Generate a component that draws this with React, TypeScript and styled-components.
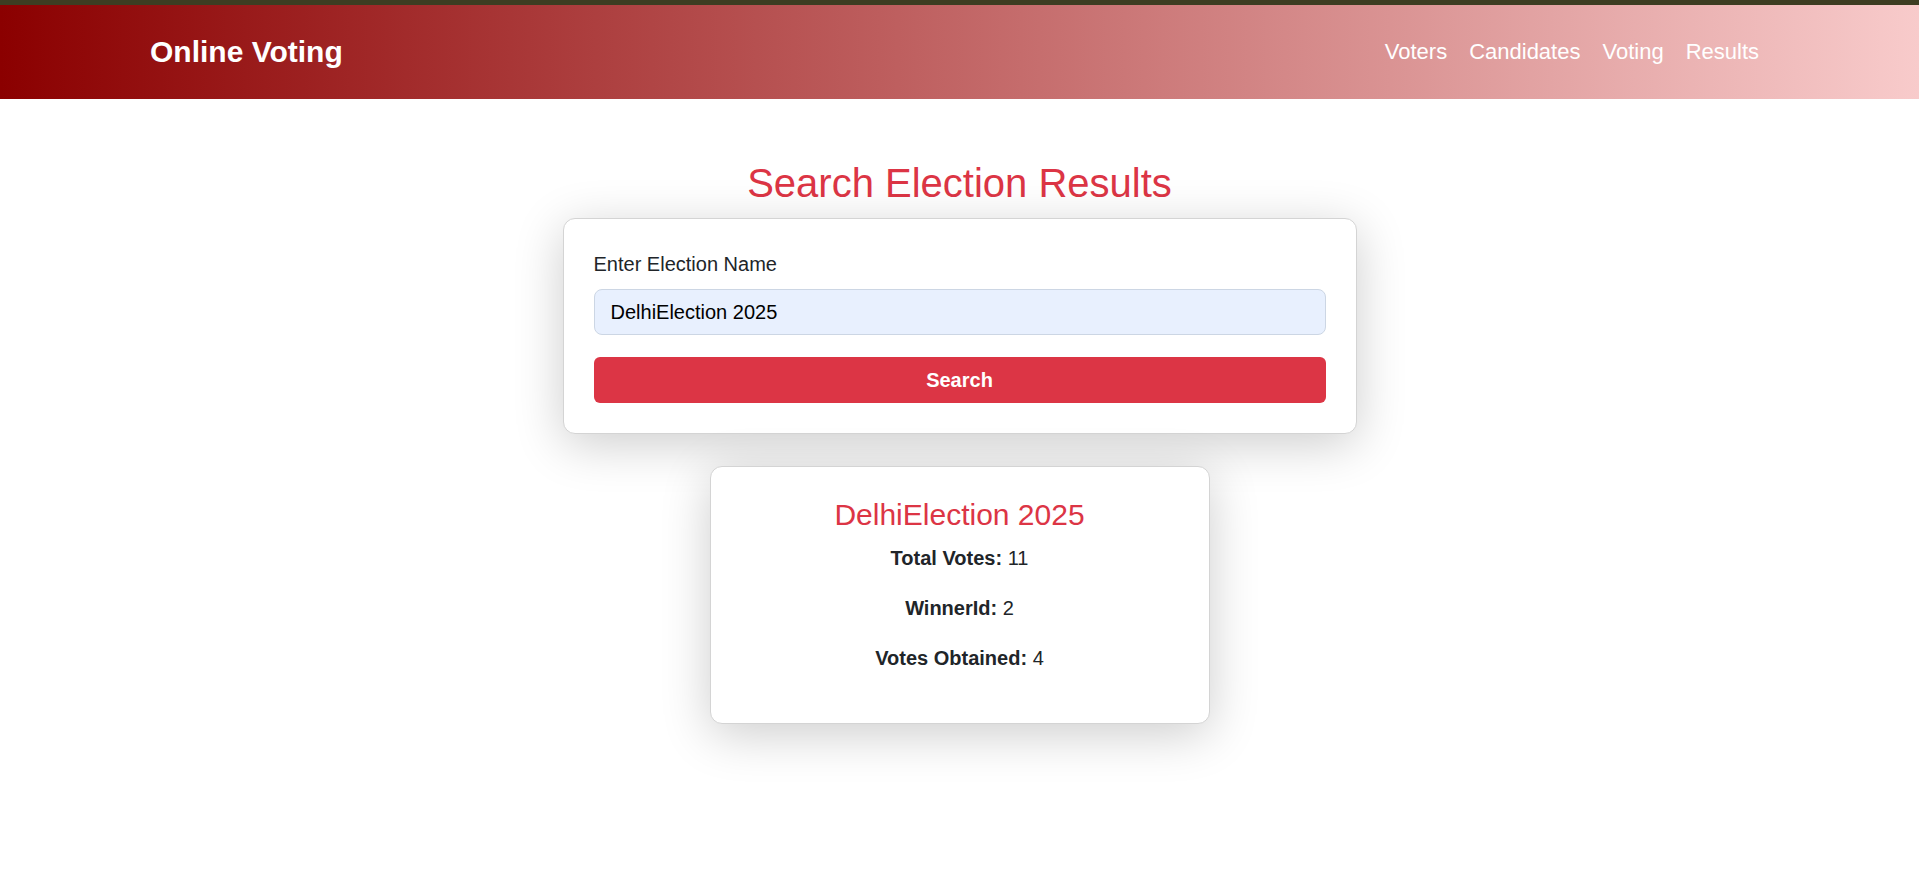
import React from "react";
import styled, { createGlobalStyle } from "styled-components";

const GlobalStyle = createGlobalStyle`
  html, body {
    margin: 0;
    padding: 0;
    background: #ffffff;
    font-family: "Liberation Sans", Arial, Helvetica, sans-serif;
    color: #212529;
  }
  * { box-sizing: border-box; }
`;

const TopStrip = styled.div`
  height: 5px;
  background: #3d3d22;
`;

const Header = styled.header`
  height: 94px;
  display: flex;
  align-items: center;
  justify-content: space-between;
  padding: 0 160px 0 150px;
  background: linear-gradient(90deg, #8b0000 0%, #f8cbcb 100%);
`;

const Brand = styled.a`
  color: #ffffff;
  font-size: 30px;
  font-weight: 700;
  text-decoration: none;
  line-height: 1;
`;

const Nav = styled.nav`
  display: flex;
  align-items: center;
  gap: 22px;
`;

const NavLink = styled.a`
  color: #ffffff;
  font-size: 22px;
  text-decoration: none;
  line-height: 1;
`;

const Main = styled.main`
  display: flex;
  flex-direction: column;
  align-items: center;
  padding-top: 60px;
  padding-bottom: 80px;
`;

const PageTitle = styled.h2`
  margin: 0 0 11px;
  font-size: 40px;
  font-weight: 400;
  line-height: 48px;
  color: #dc3545;
`;

const Card = styled.div<{ $width: number }>`
  width: ${(p) => p.$width}px;
  background: #ffffff;
  border: 1px solid #d4d4d4;
  border-radius: 12px;
  padding: 30px;
  box-shadow: 0 10px 50px rgba(0, 0, 0, 0.2);
`;

const SearchForm = styled.form`
  display: flex;
  flex-direction: column;
`;

const Label = styled.label`
  font-size: 20px;
  line-height: 30px;
  color: #212529;
  margin-bottom: 10px;
`;

const Input = styled.input`
  height: 46px;
  padding: 0 16px;
  font-family: inherit;
  font-size: 20px;
  color: #000000;
  background: #e8f0fe;
  border: 1px solid #ccd6e4;
  border-radius: 8px;
  outline: none;
  margin-bottom: 22px;
`;

const SearchButton = styled.button`
  height: 46px;
  border: none;
  border-radius: 6px;
  background: #dc3545;
  color: #ffffff;
  font-family: inherit;
  font-size: 20px;
  font-weight: 700;
  cursor: pointer;
`;

const ResultWrap = styled.div`
  margin-top: 32px;
`;

const ResultCard = styled(Card)`
  text-align: center;
`;

const ResultTitle = styled.h3`
  margin: 0 0 10px;
  font-size: 30px;
  font-weight: 400;
  line-height: 36px;
  color: #dc3545;
`;

const Row = styled.p`
  margin: 0 0 20px;
  font-size: 20px;
  line-height: 30px;
  color: #212529;
`;

const Key = styled.strong`
  font-weight: 700;
`;

export default function App() {
  const result = { name: "DelhiElection 2025", total: 11, winner: 2, votes: 4 };
  return (
    <>
      <GlobalStyle />
      <TopStrip />
      <Header>
        <Brand href="#">Online Voting</Brand>
        <Nav>
          <NavLink href="#">Voters</NavLink>
          <NavLink href="#">Candidates</NavLink>
          <NavLink href="#">Voting</NavLink>
          <NavLink href="#">Results</NavLink>
        </Nav>
      </Header>
      <Main>
        <PageTitle>Search Election Results</PageTitle>
        <Card $width={794}>
          <SearchForm onSubmit={(e) => e.preventDefault()}>
            <Label htmlFor="election">Enter Election Name</Label>
            <Input id="election" defaultValue="DelhiElection 2025" />
            <SearchButton type="submit">Search</SearchButton>
          </SearchForm>
        </Card>
        <ResultWrap>
          <ResultCard $width={500}>
            <ResultTitle>{result.name}</ResultTitle>
            <Row>
              <Key>Total Votes:</Key> {result.total}
            </Row>
            <Row>
              <Key>WinnerId:</Key> {result.winner}
            </Row>
            <Row>
              <Key>Votes Obtained:</Key> {result.votes}
            </Row>
          </ResultCard>
        </ResultWrap>
      </Main>
    </>
  );
}
